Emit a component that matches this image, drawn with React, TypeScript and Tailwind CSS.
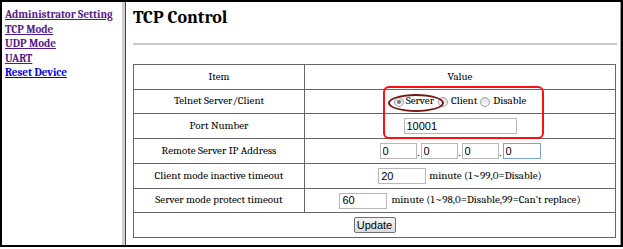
import React from "react";

const navLinks = [
  { label: "Administrator Setting", visited: true },
  { label: "TCP Mode", visited: true },
  { label: "UDP Mode", visited: true },
  { label: "UART", visited: true },
  { label: "Reset Device", visited: false },
];

const Radio: React.FC<{ checked?: boolean }> = ({ checked }) => (
  <span className="relative inline-block w-[10px] h-[10px] rounded-full border border-[#a0a0a0] bg-linear-to-b from-[#dcdcdc] to-[#fbfbfb] shrink-0">
    {checked && (
      <span className="absolute left-[2px] top-[2px] w-[4px] h-[4px] rounded-full bg-[#777]" />
    )}
  </span>
);

const TextBox: React.FC<{ value: string; w: string; focus?: boolean }> = ({ value, w, focus }) => (
  <input
    readOnly
    value={value}
    className={
      "h-[16px] border bg-white pl-[2px] text-[11px] text-black outline-none font-['Arial'] " +
      w +
      (focus ? " border-[#7aa5d6]" : " border-[#b8b8b8]")
    }
  />
);

const Row: React.FC<{ item: string; h: string; children: React.ReactNode; first?: boolean }> = ({
  item,
  h,
  children,
  first,
}) => (
  <div className={"flex " + h + (first ? "" : " border-t border-[#666]")}>
    <div className="w-[171px] border-r border-[#666] flex items-center justify-center">{item}</div>
    <div className="flex-1 flex items-center justify-center">{children}</div>
  </div>
);

export default function App() {
  return (
    <div className="w-[623px] h-[249px] bg-white overflow-hidden font-serif">
      <div className="w-[623px] h-[247px] border-2 border-black flex">
        {/* nav frame */}
        <div className="w-[120px] shrink-0 pl-[3px] pt-[6px] flex flex-col">
          {navLinks.map((l) => (
            <a
              key={l.label}
              href="#"
              className={
                "text-[11px] font-bold leading-[14.5px] underline " +
                (l.visited ? "text-[#551a8b]" : "text-[#0000ee]")
              }
            >
              {l.label}
            </a>
          ))}
        </div>
        {/* frame divider */}
        <div className="w-[3px] shrink-0 bg-[#cfcfcf]" />
        <div className="w-[1px] shrink-0 bg-[#444]" />

        {/* content frame */}
        <div className="flex-1 pl-[7px] pr-[2px] border-r border-[#9a9a9a]">
          <h1 className="mt-[7px] text-[18px] leading-[18px] font-bold text-black">TCP Control</h1>
          <div className="mt-[16px] h-[2px] bg-[#c8c8c8] mr-[1px]" />

          <div className="relative mt-[19px] w-[483px] border border-[#666] text-[11px] text-black">
            <Row item="Item" h="h-[24px]" first>
              Value
            </Row>
            <Row item="Telnet Server/Client" h="h-[24px]">
              <div className="flex items-center">
                <Radio checked />
                <span className="ml-[2px] mr-[4px]">Server</span>
                <Radio />
                <span className="ml-[3px] mr-[3px]">Client</span>
                <Radio />
                <span className="ml-[3px]">Disable</span>
              </div>
            </Row>
            <Row item="Port Number" h="h-[25px]">
              <TextBox value="10001" w="w-[113px]" />
            </Row>
            <Row item="Remote Server IP Address" h="h-[25px]">
              <div className="flex items-end">
                <TextBox value="0" w="w-[37px]" />
                <span className="w-[4px] text-center leading-[12px]">.</span>
                <TextBox value="0" w="w-[37px]" />
                <span className="w-[4px] text-center leading-[12px]">.</span>
                <TextBox value="0" w="w-[37px]" />
                <span className="w-[4px] text-center leading-[12px]">.</span>
                <TextBox value="0" w="w-[38px]" focus />
              </div>
            </Row>
            <Row item="Client mode inactive timeout" h="h-[25px]">
              <div className="flex items-center">
                <TextBox value="20" w="w-[48px]" />
                <span className="ml-[3px]">minute (1~99,0=Disable)</span>
              </div>
            </Row>
            <Row item="Server mode protect timeout" h="h-[24px]">
              <div className="flex items-center">
                <TextBox value="60" w="w-[48px]" />
                <span className="ml-[4px]">minute (1~98,0=Disable,99=Can't replace)</span>
              </div>
            </Row>
            <div className="h-[25px] border-t border-[#666] flex items-center justify-center">
              <button className="h-[16px] w-[42px] border border-[#707070] rounded-[2px] bg-linear-to-b from-[#f4f4f4] to-[#dcdcdc] text-[11px] leading-none text-black font-['Arial']">
                Update
              </button>
            </div>

            {/* annotation marks */}
            <div className="absolute left-[249px] top-[21px] w-[161px] h-[53px] border-2 border-[#ff1010] rounded-[6px] pointer-events-none" />
            <div className="absolute left-[254px] top-[29px] w-[56px] h-[18px] border-2 border-[#7a1515] rounded-[50%] pointer-events-none" />
          </div>
        </div>
      </div>
    </div>
  );
}
